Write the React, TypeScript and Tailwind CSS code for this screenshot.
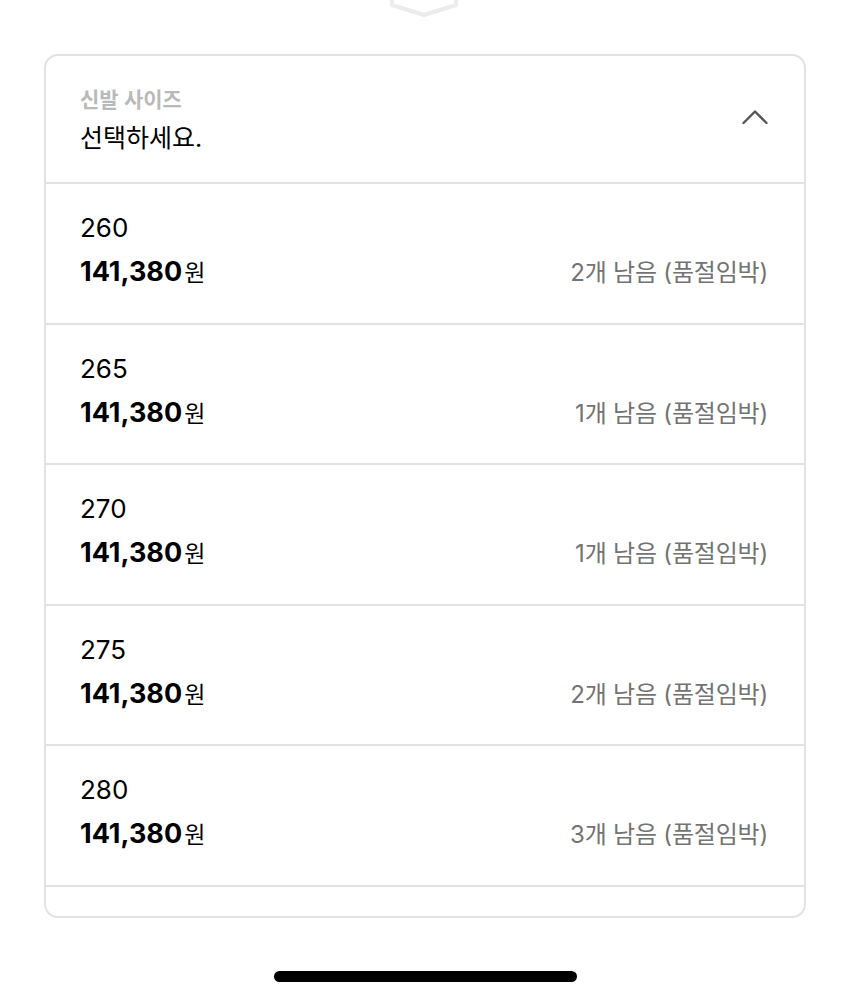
const sizes = [
  { size: "260", left: 2 },
  { size: "265", left: 1 },
  { size: "270", left: 1 },
  { size: "275", left: 2 },
  { size: "280", left: 3 },
]

const font = "font-['Inter','Noto_Sans_CJK_KR',sans-serif]"

export default function App() {
  return (
    <div className={`relative h-[1000px] w-[850px] bg-white ${font}`}>
      {/* faint handle at the very top */}
      <svg className="absolute left-[388px] top-0" width="72" height="20" viewBox="0 0 72 20">
        <path d="M4 0 V5 L36 15 L68 5 V0" fill="none" stroke="#ececec" strokeWidth="4" strokeLinejoin="round" />
      </svg>

      <div className="pt-[54px]">
        <div className="mx-[44px] h-[864px] overflow-hidden rounded-[14px] border-2 border-[#e2e2e2]">
          <div className="flex h-[128px] items-center justify-between border-b-2 border-[#e2e2e2] pl-[34px] pr-[36px]">
            <div className="flex flex-col pt-[2px]">
              <span className="text-[21px] font-semibold leading-[26px] text-[#b9b9b9]">신발 사이즈</span>
              <span className="mt-[10px] text-[25px] leading-[30px] text-black">선택하세요.</span>
            </div>
            <svg width="26" height="16" viewBox="0 0 26 16" className="mb-[4px]">
              <path d="M1.5 14 L13 2.5 L24.5 14" fill="none" stroke="#555" strokeWidth="2.4" strokeLinecap="round" strokeLinejoin="round" />
            </svg>
          </div>

          {sizes.map((s) => (
            <div
              key={s.size}
              className="flex h-[140.5px] flex-col justify-center border-b-2 border-[#e2e2e2] pl-[34px] pr-[36px]"
            >
              <span className="-mt-[3px] text-[26px] leading-[34px] text-black">{s.size}</span>
              <div className="mt-[10px] flex items-baseline justify-between">
                <span className="leading-[34px] text-black">
                  <span className="text-[27px] font-bold">141,380</span>
                  <span className="ml-[2px] text-[23px]">원</span>
                </span>
                <span className="text-[24px] tracking-[-0.2px] text-[#737373]">{s.left}개 남음 (품절임박)</span>
              </div>
            </div>
          ))}
        </div>
      </div>

      <div className="absolute left-[274px] top-[971px] h-[11px] w-[303px] rounded-full bg-black" />
    </div>
  )
}
